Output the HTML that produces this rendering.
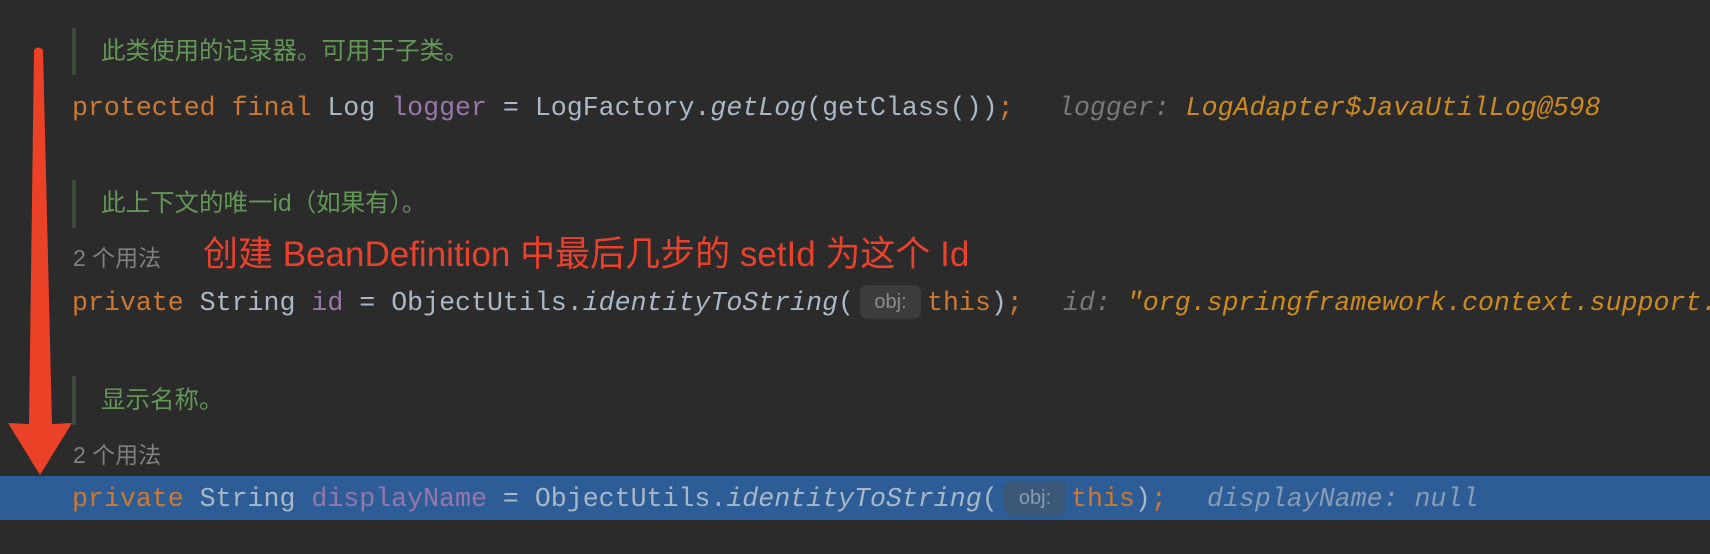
<!DOCTYPE html>
<html><head><meta charset="utf-8"><style>
body{margin:0;width:1710px;height:554px;background:#2b2b2b;overflow:hidden;position:relative}
.a{position:absolute;white-space:pre}
.code{font-family:"Liberation Mono",monospace;font-size:26.6px;color:#a9b7c6;line-height:32px}
.cm{font-family:"Liberation Sans","Noto Sans CJK SC",sans-serif;font-size:24.5px;color:#629755;line-height:30px}
.us{font-family:"Liberation Sans","Noto Sans CJK SC",sans-serif;font-size:23px;color:#808080;line-height:28px}
.bar{position:absolute;left:72px;width:4px;background:#3b4a39}
.k{color:#cc7832}.f{color:#9876aa}.i{font-style:italic}
.h{color:#787878;font-style:italic}.v{color:#cc8a1e;font-style:italic}
.box{position:absolute;background:#3b3c3e;border-radius:7px;font-family:"Liberation Sans",sans-serif;font-size:20px;color:#8c8c8c;text-align:center;line-height:34px}
</style></head><body>
<div class="bar" style="top:28px;height:47px"></div>
<div class="a cm" style="left:101px;top:37px">此类使用的记录器。可用于子类。</div>
<div class="a code" style="left:72px;top:92px"><span class="k">protected final </span>Log <span class="f">logger</span> = LogFactory.<span class="i">getLog</span>(getClass())<span class="k">;</span></div>
<div class="a code" style="left:1058px;top:92px"><span class="h">logger: </span><span class="v">LogAdapter$JavaUtilLog@598</span></div>

<div class="bar" style="top:180px;height:48px"></div>
<div class="a cm" style="left:101px;top:189px">此上下文的唯一id（如果有）。</div>
<div class="a us" style="left:73px;top:244px">2 个用法</div>
<div class="a" style="left:203px;top:234px;font-family:'Liberation Sans','Noto Sans CJK SC',sans-serif;font-size:35px;color:#e8412c;line-height:42px">创建 BeanDefinition 中最后几步的 setId 为这个 Id</div>
<div class="a code" style="left:72px;top:287px"><span class="k">private </span>String <span class="f">id</span> = ObjectUtils.<span class="i">identityToString</span>(</div>
<div class="box" style="left:860px;top:285px;width:61px;height:34px">obj:</div>
<div class="a code" style="left:927px;top:287px"><span class="k">this</span>)<span class="k">;</span></div>
<div class="a code" style="left:1063px;top:287px"><span class="h">id: </span><span class="v">"org.springframework.context.support.</span></div>

<div class="bar" style="top:376px;height:49px"></div>
<div class="a cm" style="left:101px;top:386px">显示名称。</div>
<div class="a us" style="left:73px;top:441px">2 个用法</div>
<div style="position:absolute;left:0;top:476px;width:1710px;height:44px;background:#2c5d97"></div>
<div class="a code" style="left:72px;top:483px"><span class="k">private </span>String <span class="f">displayName</span> = ObjectUtils.<span class="i">identityToString</span>(</div>
<div class="box" style="left:1004px;top:481px;width:62px;height:34px;background:#3c5878;color:#8a9ab0">obj:</div>
<div class="a code" style="left:1071px;top:483px"><span class="k">this</span>)<span class="k">;</span></div>
<div class="a code" style="left:1207px;top:483px;color:#8a9bb5"><span class="i">displayName: null</span></div>

<svg style="position:absolute;left:0;top:0" width="100" height="554">
<path d="M34 50 Q38 45 43 50 L52 424 L72 423 L40 475 L8 423 L29 424 Z" fill="#ea4127"/>
</svg>
</body></html>
